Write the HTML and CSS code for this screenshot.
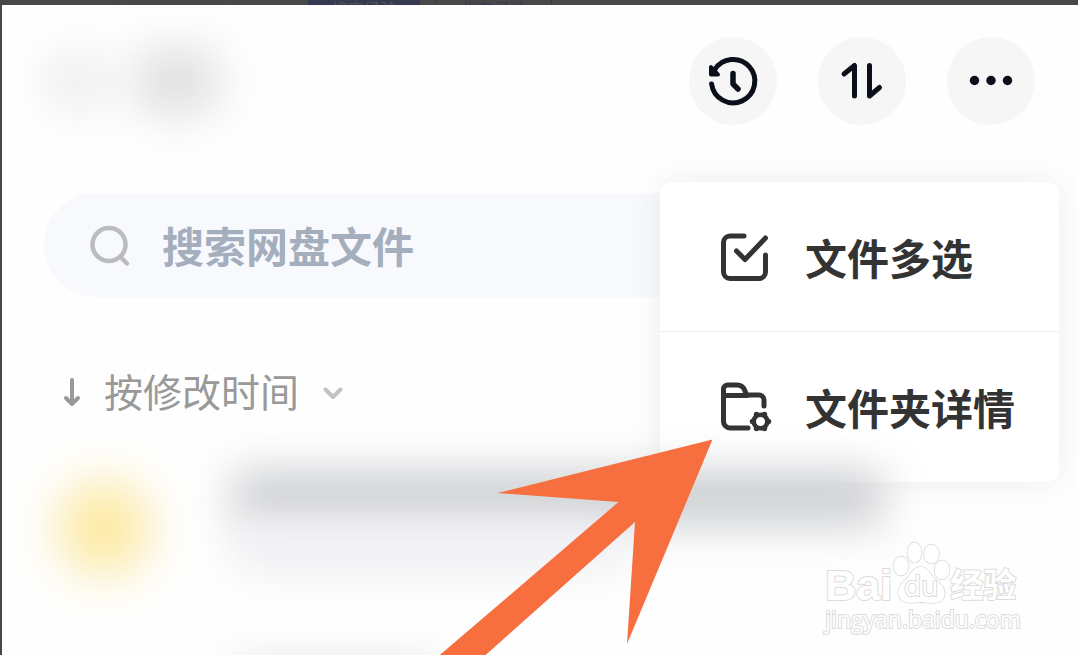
FILE: index.html
```html
<!DOCTYPE html>
<html lang="zh-CN">
<head>
<meta charset="utf-8">
<meta name="viewport" content="width=device-width, initial-scale=1">
<title>网盘文件</title>
<link rel="stylesheet" href="styles.css">
</head>
<body>
<div class="backdrop">
  <nav class="topstrip">
    <a class="tab tab-active" href="#">搜索经验</a>
    <a class="tab tab-outline" href="#">发布经验</a>
  </nav>
  <main class="screen">
    <header class="header">
      <div class="title-blur"><span class="smudge smudge-light"></span><span class="smudge smudge-dark"></span></div>
      <div class="actions">
        <button class="round" type="button" aria-label="历史记录">
          <svg width="88" height="88" viewBox="0 0 88 88" fill="none" stroke="#0b0f1a" stroke-width="5" stroke-linecap="round" stroke-linejoin="round">
            <path d="M25.500 33A21.700 21.700 0 1 1 22.600 47"/>
            <path d="M22 30v7.500h7z" fill="#0b0f1a" stroke-width="4"/>
            <path d="M44 36.500v10.500l5 5" stroke-width="5.500"/>
          </svg>
        </button>
        <button class="round" type="button" aria-label="排序">
          <svg width="88" height="88" viewBox="0 0 88 88" fill="none" stroke="#0b0f1a" stroke-width="5" stroke-linecap="round" stroke-linejoin="round">
            <path d="M26 37l10.500-8.500v30.500M51.500 28.500v30.500l10-8.500"/>
          </svg>
        </button>
        <button class="round" type="button" aria-label="更多">
          <svg width="88" height="88" viewBox="0 0 88 88" fill="#0b0f1a">
            <circle cx="27.500" cy="43.500" r="4.700"/><circle cx="44" cy="43.500" r="4.700"/><circle cx="60.500" cy="43.500" r="4.700"/>
          </svg>
        </button>
      </div>
      <div class="menu" role="menu">
        <button class="menu-item" type="button" role="menuitem">
          <svg width="54" height="52" viewBox="0 0 54 52" fill="none" stroke="#333" stroke-width="5" stroke-linecap="round" stroke-linejoin="round">
            <path d="M26 5H12a6.500 6.500 0 0 0-6.500 6.500v29.500a6.500 6.500 0 0 0 6.500 6.500h29a6.500 6.500 0 0 0 6.500-6.500V24"/>
            <path d="M18.500 20l8.500 8.500L47.500 7"/>
          </svg>
          <span>文件多选</span>
        </button>
        <button class="menu-item" type="button" role="menuitem">
          <svg width="54" height="52" viewBox="0 0 54 52" fill="none" stroke="#333" stroke-width="5" stroke-linecap="round" stroke-linejoin="round">
            <path d="M30 47H12a6.500 6.500 0 0 1-6.500-6.500V8a4 4 0 0 1 4-4h9.500q6 0 8 6l1.500 4H41a5 5 0 0 1 5 5v6M5.500 14.500h24"/>
            <circle cx="42.500" cy="40.500" r="6.800" stroke-width="4.500"/>
            <g fill="#333" stroke="none"><circle cx="50.500" cy="40.500" r="2.700"/><circle cx="34.500" cy="40.500" r="2.700"/><circle cx="46.500" cy="33.400" r="2.700"/><circle cx="38.500" cy="33.400" r="2.700"/><circle cx="46.500" cy="47.600" r="2.700"/><circle cx="38.500" cy="47.600" r="2.700"/></g>
          </svg>
          <span>文件夹详情</span>
        </button>
      </div>
    </header>
    <label class="search">
      <svg width="44" height="44" viewBox="0 0 44 44" fill="none" stroke="#bbbcbd" stroke-width="4.500" stroke-linecap="round">
        <circle cx="21" cy="21.500" r="16.500"/><path d="M34 35.500l5 5"/>
      </svg>
      <input class="search-input" type="search" placeholder="搜索网盘文件" aria-label="搜索网盘文件">
    </label>
    <button class="sort" type="button">
      <svg width="20" height="32" viewBox="0 0 20 32" fill="none" stroke="#999" stroke-width="4" stroke-linecap="round" stroke-linejoin="round"><path d="M10 3v24M4 21l6 6 6-6"/></svg>
      <span>按修改时间</span>
      <svg width="20" height="14" viewBox="0 0 20 14" fill="none" stroke="#c2c2c2" stroke-width="4" stroke-linecap="round" stroke-linejoin="round"><path d="M2.500 3.500L10 11l7.500-7.500"/></svg>
    </button>
    <section class="files">
      <div class="thumb"></div>
      <div class="lines">
        <div class="line-name"></div>
        <div class="line-info"></div>
        <div class="line-next"></div>
      </div>
    </section>
    <svg class="arrow" width="280" height="230" viewBox="0 0 280 230" fill="#f76e3f"><path d="M278.500 9.500L63.500 63l121 9L0 230h46L201 92l-8 122z"/></svg>
    <div class="watermark">
      <div class="brand">
        <span class="brand-bai">Bai</span>
        <span class="paw">
          <svg width="58" height="64" viewBox="0 0 58 64" fill="#fff" stroke="#d9d9d9" stroke-width="1.500">
            <ellipse cx="9" cy="25" rx="7.500" ry="9.500"/><ellipse cx="22.500" cy="11.500" rx="7" ry="10"/><ellipse cx="39.500" cy="13" rx="7.500" ry="9.500"/><ellipse cx="50" cy="29" rx="7.500" ry="9.500"/>
            <path d="M29 26c-8 0-10 7-15 12S4 49 7 56s14 6 22 5c9 1 20 3 23-5s-4-14-9-18-7-12-14-12z"/>
          </svg>
          <span class="paw-text">du</span>
        </span>
        <span class="brand-cn">经验</span>
      </div>
      <div class="domain">jingyan.baidu.com</div>
    </div>
  </main>
</div>
</body>
</html>
```
FILE: styles.css
```css
* { box-sizing: border-box; }
body {
  margin: 0;
  font-family: "Noto Sans CJK SC", "Noto Sans", sans-serif;
  background: #484848;
}
button {
  border: 0;
  padding: 0;
  background: none;
  font: inherit;
  color: inherit;
}
svg { display: block; flex: none; }
.backdrop {
  display: flex;
  flex-direction: column;
  height: 100vh;
  overflow: hidden;
}
.topstrip {
  display: flex;
  flex: none;
  gap: 16px;
  height: 5px;
  padding-left: 308px;
  overflow: hidden;
}
.tab {
  height: 24px;
  width: 112px;
  font-size: 16px;
  line-height: 16px;
  text-align: center;
  text-decoration: none;
  color: #50525c;
}
.tab-active { background: #363a50; }
.tab-outline {
  width: 116px;
  border: solid #363a50;
  border-width: 0 1px;
  color: #363a50;
}
.screen {
  position: relative;
  flex: 1;
  min-height: 0;
  margin-left: 2px;
  overflow: hidden;
  background: #fefefe;
}
.header {
  position: relative;
  display: flex;
  align-items: center;
  justify-content: space-between;
  padding: 32px 43px 0 42px;
}
.title-blur {
  display: flex;
  align-items: center;
  gap: 24px;
}
.smudge { border-radius: 50%; }
.smudge-light {
  width: 64px;
  height: 64px;
  background: #efefef;
  filter: blur(20px);
}
.smudge-dark {
  width: 88px;
  height: 64px;
  background: #dadada;
  filter: blur(24px);
}
.actions { display: flex; gap: 41px; }
.round {
  width: 88px;
  height: 88px;
  border-radius: 50%;
  background: #f6f6f7;
}
.menu {
  position: absolute;
  z-index: 1;
  top: 177px;
  right: 19px;
  width: 399px;
  border-radius: 12px;
  background: #fff;
  box-shadow: 0 0 32px rgba(0, 0, 0, 0.07);
}
.menu-item {
  display: flex;
  align-items: center;
  gap: 33px;
  width: 100%;
  height: 149px;
  padding-left: 58px;
  font-size: 42px;
  font-weight: 700;
  line-height: 56px;
  color: #333;
}
.menu-item + .menu-item {
  height: 151px;
  border-top: 1px solid #eee;
}
.search {
  display: flex;
  align-items: center;
  gap: 30px;
  height: 104px;
  margin: 68px 43px 0 42px;
  padding-left: 44px;
  border-radius: 52px;
  background: #f7f9fd;
}
.search-input {
  flex: 1;
  min-width: 0;
  border: 0;
  padding: 0;
  outline: 0;
  background: none;
  font: 700 42px/60px "Noto Sans CJK SC", sans-serif;
}
.search-input::placeholder { color: #a5aebd; opacity: 1; }
.sort {
  display: flex;
  align-items: center;
  margin: 69px 0 0 60px;
  font-size: 39px;
  line-height: 48px;
  color: #999;
}
.sort span { margin: 0 24px 0 22px; padding-bottom: 6px; }
.files {
  position: relative;
  z-index: 2;
  display: flex;
  gap: 86px;
  padding: 52px 196px 0 58px;
  pointer-events: none;
}
.thumb {
  width: 88px;
  height: 88px;
  margin-top: 12px;
  border-radius: 50%;
  background: #fce695;
  filter: blur(26px);
}
.lines { flex: 1; }
.line-name {
  height: 52px;
  background: #cacccf;
  filter: blur(22px);
}
.line-info {
  width: 60%;
  height: 48px;
  background: #eff0f3;
  filter: blur(20px);
}
.line-next {
  width: 200px;
  height: 40px;
  margin-top: 88px;
  background: #e6e6e6;
  filter: blur(20px);
}
.arrow {
  position: absolute;
  z-index: 3;
  left: 432px;
  top: 425px;
}
.watermark {
  position: absolute;
  z-index: 3;
  right: 57px;
  bottom: 22px;
  color: #fff;
  -webkit-text-stroke: 2px #dcdcdc;
  paint-order: stroke fill;
  font-family: "Open Sans", "Noto Sans CJK SC", sans-serif;
}
.brand {
  display: flex;
  align-items: flex-end;
  height: 64px;
  line-height: 40px;
  font-weight: 700;
}
.brand-bai { font-family: "Liberation Sans", sans-serif; font-size: 43px; }
.brand-cn { font-size: 33px; }
.paw { position: relative; }
.paw-text {
  position: absolute;
  inset: 24px 0 0;
  text-align: center;
  font-size: 28px;
  font-weight: 400;
}
.domain { font-size: 23px; line-height: 28px; }
```
